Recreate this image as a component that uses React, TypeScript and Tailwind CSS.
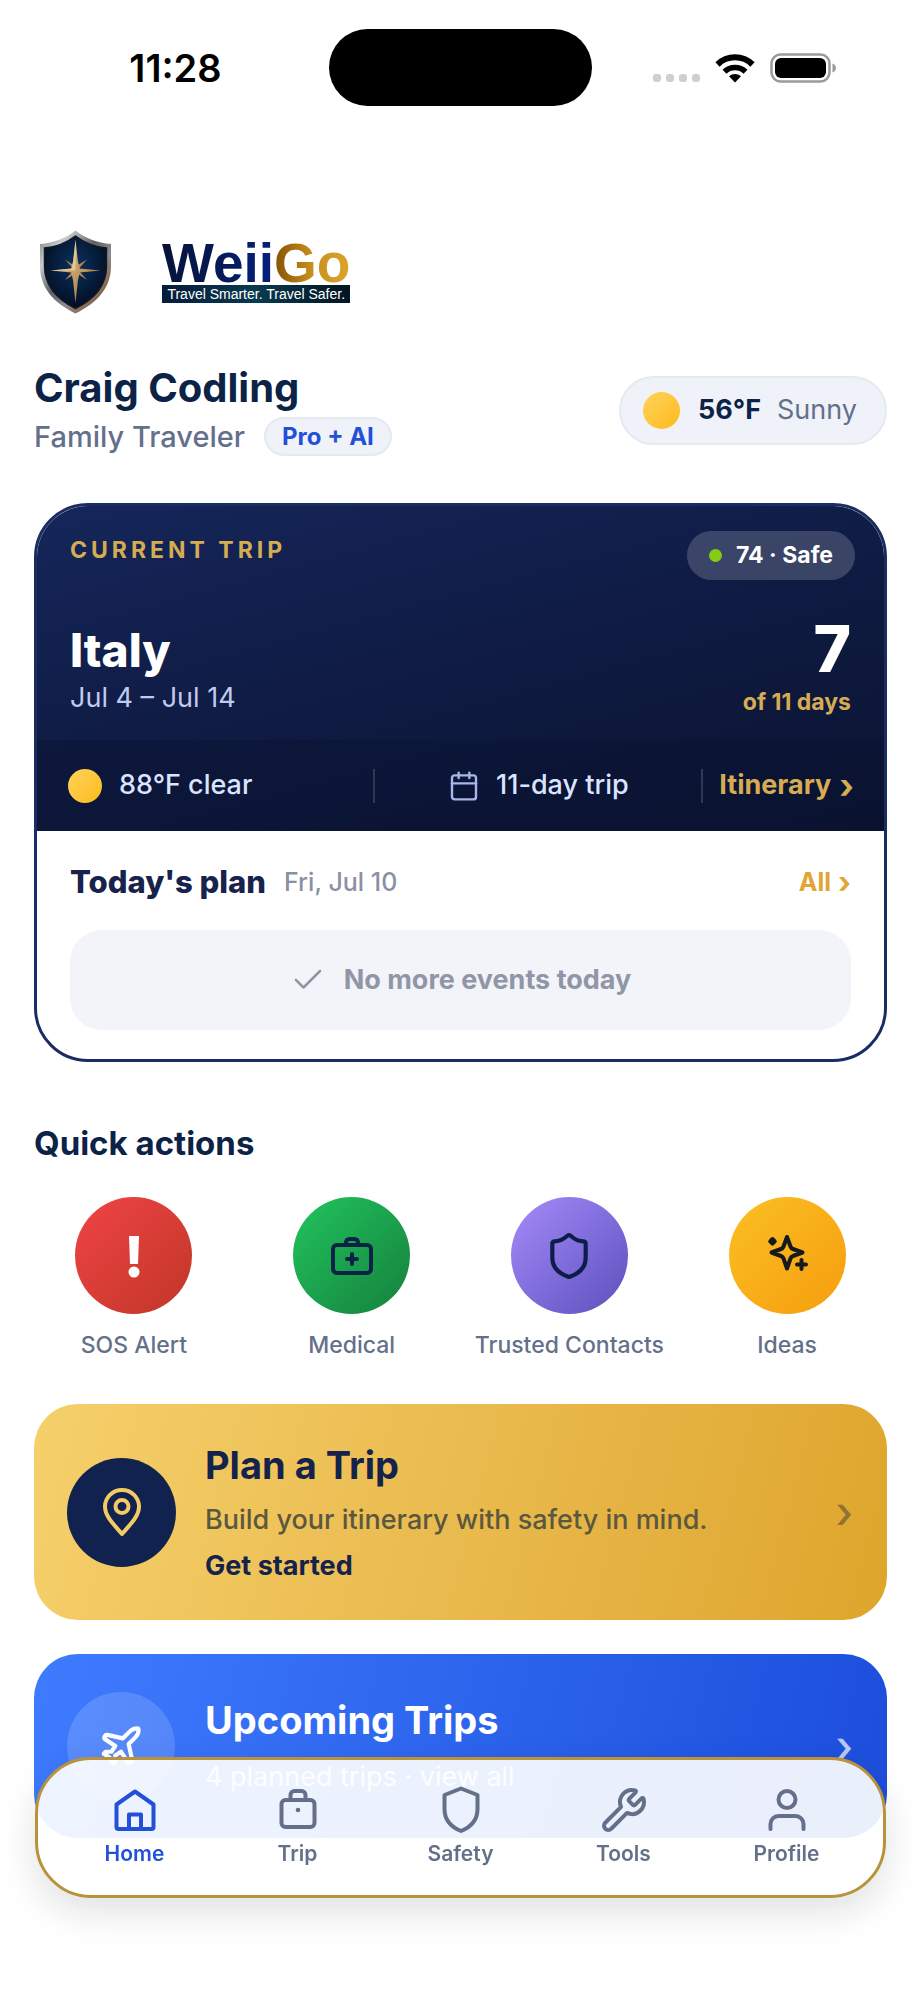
import type { ReactNode } from "react";
import { Calendar, Check, Plane, Shield, Wrench } from "lucide-react";

function StatusBar() {
  return (
    <div className="grid grid-cols-[1fr_263px_1fr] items-center pt-[29px]">
      <time className="pl-[22px] text-center text-[38px] leading-[44px] font-semibold text-black">11:28</time>
      <div className="h-[77px] rounded-full bg-black" />
      <div className="flex items-center pl-[61px]">
        <svg className="mt-5 h-2 w-[47px] text-[#cfcfcf]" viewBox="0 0 47 8" fill="currentColor" aria-hidden="true">
          <rect width="8" height="8" rx="3" />
          <rect x="13" width="8" height="8" rx="3" />
          <rect x="26" width="8" height="8" rx="3" />
          <rect x="39" width="8" height="8" rx="3" />
        </svg>
        <svg className="ml-[15px] h-[30px] w-10" viewBox="0 0 40 30" aria-hidden="true">
          <path d="M2.5 11.5a25 25 0 0 1 35 0" fill="none" stroke="#000" strokeWidth="6" />
          <path d="M9.5 18.8a15 15 0 0 1 21 0" fill="none" stroke="#000" strokeWidth="5.6" />
          <path d="M20 29.5l-6-6.300a9 9 0 0 1 12 0z" fill="#000" />
        </svg>
        <svg className="ml-[15px] h-[30px] w-[66px]" viewBox="0 0 66 30" aria-hidden="true">
          <rect x="1.500" y="1.500" width="58" height="27" rx="9" fill="none" stroke="#9a9a9a" strokeWidth="2.500" />
          <rect x="5" y="5" width="51" height="20" rx="6" fill="#000" />
          <path d="M62.500 10.500c4.500 1.500 4.500 7.500 0 9z" fill="#9a9a9a" />
        </svg>
      </div>
    </div>
  );
}

function ShieldLogo() {
  return (
    <svg className="h-[84px] w-[73px]" viewBox="0 0 73 84" role="img" aria-label="WeiiGo shield">
      <defs>
        <linearGradient id="rim" x1="0" y1="0" x2="1" y2="1">
          <stop offset="0" stopColor="#77797e" />
          <stop offset="0.22" stopColor="#c9cbce" />
          <stop offset="0.45" stopColor="#5c5f65" />
          <stop offset="0.62" stopColor="#8b8d92" />
          <stop offset="0.78" stopColor="#8a6c56" />
          <stop offset="1" stopColor="#3d3f45" />
        </linearGradient>
        <radialGradient id="field" cx="0.5" cy="0.4" r="0.6">
          <stop offset="0" stopColor="#0a3160" />
          <stop offset="1" stopColor="#020d22" />
        </radialGradient>
        <linearGradient id="star" x1="0" y1="0" x2="1" y2="1">
          <stop offset="0" stopColor="#f7dca8" />
          <stop offset="1" stopColor="#96622a" />
        </linearGradient>
      </defs>
      <path
        d="M36.500 .5C46 8 58 13 72 14v22c0 22-14 37-35.500 47.500C15 73 1 58 1 36V14C15 13 27 8 36.500 .5z"
        fill="url(#rim)"
      />
      <path
        d="M36.500 6C45 12.500 56 17 67.500 18v18c0 19-12 33-31 42.500C17.500 69 5.500 55 5.500 36V18C17 17 28 12.500 36.500 6z"
        fill="url(#field)"
        stroke="#15181d"
        strokeWidth="1.500"
      />
      <path d="M26 29.500l9 10-9 10.500 11.500-7L48 50l-9-10.500 9-10-11.500 7z" fill="#b98543" />
      <path
        d="M36.500 9.500l2.400 22 1.800 7 20.800 2-20.800 2-1.800 8-2.400 22.500-2.400-22.500-1.800-8-20.800-2 20.800-2 1.800-7z"
        fill="url(#star)"
      />
      <path d="M36.500 9.500v31h-25l20.800-2 1.800-7z" fill="#fff0c9" opacity="0.450" />
    </svg>
  );
}

function Brand() {
  return (
    <div className="mt-[124px] flex items-center gap-[50px] pl-[5px]">
      <ShieldLogo />
      <div className="font-['Liberation_Sans',Arial,sans-serif]">
        <div className="text-[55px] leading-[44px] font-bold">
          <span className="bg-linear-to-r from-[#071238] to-[#04207a] bg-clip-text text-transparent">Weii</span>
          <span className="bg-linear-to-r from-[#845306] via-[#c98f1c] to-[#dba62c] bg-clip-text text-transparent">Go</span>
        </div>
        <div className="bg-linear-to-r from-[#061c3a] via-[#0a3a50] to-[#031522] text-center text-sm leading-[18px] text-white">
          Travel Smarter. Travel Safer.
        </div>
      </div>
    </div>
  );
}

function Sun({ className }: { className: string }) {
  return <span className={`shrink-0 rounded-full bg-linear-to-br from-[#ffd257] to-[#fdbb0b] ${className}`} />;
}

function Greeting() {
  return (
    <header className="mt-[50px] flex items-center justify-between">
      <div>
        <h1 className="text-[40px] leading-[48px] font-bold text-[#0c2347]">Craig Codling</h1>
        <div className="mt-[5px] flex items-center gap-[19px]">
          <p className="text-[29px] leading-9 font-medium text-[#64708a]">Family Traveler</p>
          <span className="rounded-full border-2 border-[#e4e9f2] bg-[#eff3f9] px-4 text-[24px] leading-[35px] font-bold text-[#2250d8]">
            Pro + AI
          </span>
        </div>
      </div>
      <div className="flex h-[69px] items-center rounded-full border-2 border-[#e4e9f2] bg-[#eff3f9] pr-7 pl-[22px] text-[27px]">
        <Sun className="size-[37px]" />
        <span className="ml-[18px] font-bold text-[#0c2347]">56°F</span>
        <span className="ml-4 text-[#64708a]">Sunny</span>
      </div>
    </header>
  );
}

function CurrentTrip() {
  return (
    <section className="mt-[47px] overflow-hidden rounded-[54px] border-3 border-[#1a2c62] bg-white">
      <div className="bg-linear-165 from-[#15265a] via-[#0f1b43] to-[#0a1330]">
        <div className="px-[33px] pt-[25px] pb-[22px]">
          <div className="flex items-start justify-between">
            <h2 className="text-[23px] leading-[38px] font-bold tracking-[4px] text-[#d6ac53]">CURRENT TRIP</h2>
            <div className="-mr-1 flex h-[49px] items-center gap-[14px] rounded-full bg-white/18 px-[22px] text-[23px] font-bold text-white">
              <span className="size-[13px] rounded-full bg-[#84cc16]" />
              74 · Safe
            </div>
          </div>
          <div className="mt-[42px] flex items-start justify-between">
            <div>
              <p className="text-[46px] leading-[56px] font-extrabold text-white">Italy</p>
              <p className="text-[27px] leading-10 text-[#c0caf0]">Jul 4 – Jul 14</p>
            </div>
            <div className="text-right">
              <p className="text-[64px] leading-[54px] font-extrabold text-white">7</p>
              <p className="mt-[10px] text-[23px] leading-8 font-bold text-[#d6ac53]">of 11 days</p>
            </div>
          </div>
        </div>
        <div className="flex h-[91px] items-center bg-[#0a1230]/40 pr-[30px] pl-[31px] text-[27px] font-medium text-[#dbe4ff]">
          <div className="flex grow-15 basis-0 items-center gap-[17px]">
            <Sun className="size-[34px]" />
            88°F clear
          </div>
          <span className="h-[34px] w-0.5 bg-white/15" />
          <div className="flex grow-16 basis-0 items-center justify-center gap-4">
            <Calendar className="size-8 text-[#a9b6ea]" strokeWidth={1.8} />
            11-day trip
          </div>
          <span className="h-[34px] w-0.5 bg-white/15" />
          <a href="#itinerary" className="flex items-center gap-2 pl-4 font-bold text-[#d6ac53]">
            Itinerary <span className="text-[34px] leading-10">›</span>
          </a>
        </div>
      </div>
      <div className="px-[33px] pt-[31px] pb-[29px]">
        <div className="flex items-center text-[25px] leading-10">
          <h3 className="text-[31px] font-extrabold text-[#17234b]">Today's plan</h3>
          <span className="ml-[18px] font-medium text-[#8b90a5]">Fri, Jul 10</span>
          <a href="#plan" className="ml-auto flex items-center gap-[7px] font-bold text-[#dfa535]">
            All <span className="text-[30px]">›</span>
          </a>
        </div>
        <div className="mt-7 flex h-[100px] items-center justify-center gap-[18px] rounded-[32px] bg-[#f2f4f9] text-[27px] font-bold text-[#9196a6]">
          <Check className="size-[36px]" strokeWidth={1.7} />
          No more events today
        </div>
      </div>
    </section>
  );
}

const iconProps = {
  viewBox: "0 0 48 48",
  fill: "none",
  stroke: "currentColor",
  strokeWidth: 4,
  strokeLinecap: "round",
  strokeLinejoin: "round",
  className: "size-12",
  "aria-hidden": true,
} as const;

const actions: { label: string; tone: string; icon: ReactNode }[] = [
  {
    label: "SOS Alert",
    tone: "bg-linear-135 from-[#f04444] to-[#c13628] text-white",
    icon: (
      <svg {...iconProps}>
        <path d="M19 4h10l-1 28h-8z" fill="currentColor" stroke="none" />
        <circle cx="24" cy="40" r="5.500" fill="currentColor" stroke="none" />
      </svg>
    ),
  },
  {
    label: "Medical",
    tone: "bg-linear-135 from-[#22c55e] to-[#15803d] text-[#0c2347]",
    icon: (
      <svg {...iconProps}>
        <rect x="5" y="13" width="38" height="28" rx="4" />
        <path d="M18 13v-2.500a3.500 3.500 0 0 1 3.500-3.500h5a3.500 3.500 0 0 1 3.500 3.500V13M24 22v10M19 27h10" />
      </svg>
    ),
  },
  {
    label: "Trusted Contacts",
    tone: "bg-linear-135 from-[#a78bfa] to-[#5b50bd] text-[#0e1c4a]",
    icon: <Shield className="size-[50px]" />,
  },
  {
    label: "Ideas",
    tone: "bg-linear-135 from-[#fbbf24] to-[#f59e0b] text-[#161a1c]",
    icon: (
      <svg {...iconProps}>
        <path d="M24 5l3.500 9.500a4 4 0 0 0 2.500 2.500L39.500 20.500 30 24a4 4 0 0 0-2.500 2.500L24 36.500l-3.500-10A4 4 0 0 0 18 24L8.500 20.500 18 17a4 4 0 0 0 2.500-2.500zM38.500 28v9M34 32.500h9" />
        <path d="M9.500 7l2.300 2.300-2.300 2.300-2.300-2.300z" fill="currentColor" />
      </svg>
    ),
  },
];

function QuickActions() {
  return (
    <section className="mt-[59px]">
      <h2 className="text-[33px] leading-[44px] font-bold text-[#0c2347]">Quick actions</h2>
      <div className="-mx-[9px] mt-8 grid grid-cols-4">
        {actions.map(({ label, tone, icon }) => (
          <button key={label} type="button" className="flex flex-col items-center gap-4">
            <span className={`flex size-[117px] items-center justify-center rounded-full ${tone}`}>{icon}</span>
            <span className="text-[23px] leading-[30px] font-medium whitespace-nowrap text-[#64708a]">{label}</span>
          </button>
        ))}
      </div>
    </section>
  );
}

function PlanTripCard() {
  return (
    <a
      href="#plan-a-trip"
      className="mt-11 flex items-center rounded-[44px] bg-linear-105 from-[#f5d06b] to-[#dea52a] py-9 pr-[34px] pl-[33px]"
    >
      <span className="flex size-[109px] shrink-0 items-center justify-center rounded-full bg-[#12224e] text-[#f2cb66]">
        <svg {...iconProps}>
          <path d="M24 46C16 36.500 7 28.500 7 18.500a17 16.500 0 0 1 34 0C41 28.500 32 36.500 24 46z" />
          <circle cx="24" cy="18.500" r="6.500" />
        </svg>
      </span>
      <span className="ml-[29px] flex flex-1 flex-col">
        <span className="text-[38px] leading-[50px] font-bold text-[#14224c]">Plan a Trip</span>
        <span className="mt-2.5 text-[27px] leading-10 font-medium text-[#5b583f]">
          Build your itinerary with safety in mind.
        </span>
        <span className="mt-2 text-[27px] leading-9 font-bold text-[#14224c]">Get started</span>
      </span>
      <span className="text-[44px] leading-10 font-medium text-[#907335]">›</span>
    </a>
  );
}

function UpcomingTripsCard() {
  return (
    <a
      href="#upcoming"
      className="mt-[34px] flex items-center rounded-[44px] bg-linear-105 from-[#3f7bff] to-[#1c4ddb] py-[38px] pr-[34px] pl-[33px]"
    >
      <span className="flex size-[108px] shrink-0 items-center justify-center rounded-full bg-white/15 text-white">
        <Plane className="size-[46px]" strokeWidth={2.2} />
      </span>
      <span className="ml-[30px] flex flex-1 flex-col">
        <span className="text-[38px] leading-[50px] font-bold text-white">Upcoming Trips</span>
        <span className="mt-3 text-[27px] leading-10 text-white/85">4 planned trips · view all</span>
      </span>
      <span className="text-[44px] leading-10 font-medium text-white/70">›</span>
    </a>
  );
}

const tabs: { label: string; icon: ReactNode }[] = [
  {
    label: "Home",
    icon: (
      <svg {...iconProps}>
        <path d="M5.500 18.500 24 5.500l18.500 13V41a2 2 0 0 1-2 2h-33a2 2 0 0 1-2-2zM18 43V28.500h12V43" />
      </svg>
    ),
  },
  {
    label: "Trip",
    icon: (
      <svg {...iconProps}>
        <rect x="7.500" y="14" width="33" height="27" rx="4" />
        <path d="M16.500 14V9a4 4 0 0 1 4-4h7a4 4 0 0 1 4 4v5" />
        <circle cx="24" cy="24" r="2.300" fill="currentColor" stroke="none" />
      </svg>
    ),
  },
  {
    label: "Safety",
    icon: (
      <svg {...iconProps}>
        <path d="M24 2.500 40.500 9v14c0 10.500-6.500 18-16.500 22C14 41 7.500 33.500 7.500 23V9z" />
      </svg>
    ),
  },
  { label: "Tools", icon: <Wrench className="size-12" /> },
  {
    label: "Profile",
    icon: (
      <svg {...iconProps}>
        <circle cx="24" cy="13.500" r="8.500" />
        <path d="M7.500 43v-5a8 8 0 0 1 8-8h17a8 8 0 0 1 8 8v5" />
      </svg>
    ),
  },
];

function TabBar() {
  return (
    <nav className="fixed inset-x-[35px] bottom-[102px] grid grid-cols-5 rounded-[56px] border-3 border-[#b9923a] bg-white/91 px-[15px] pt-[26px] pb-[26px] shadow-[0_14px_36px_rgba(15,23,42,0.13)]">
      {tabs.map(({ label, icon }) => (
        <a
          key={label}
          href={`#${label.toLowerCase()}`}
          aria-current={label === "Home" ? "page" : undefined}
          className="flex flex-col items-center gap-[5px] text-[#64708a] aria-[current=page]:text-[#2250d8]"
        >
          {icon}
          <span className="text-[21px] leading-[30px] font-semibold">{label}</span>
        </a>
      ))}
    </nav>
  );
}

export default function App() {
  return (
    <div className="bg-white font-[Inter,sans-serif]">
      <StatusBar />
      <main className="px-[34px] pb-[150px]">
        <Brand />
        <Greeting />
        <CurrentTrip />
        <QuickActions />
        <PlanTripCard />
        <UpcomingTripsCard />
      </main>
      <TabBar />
    </div>
  );
}
